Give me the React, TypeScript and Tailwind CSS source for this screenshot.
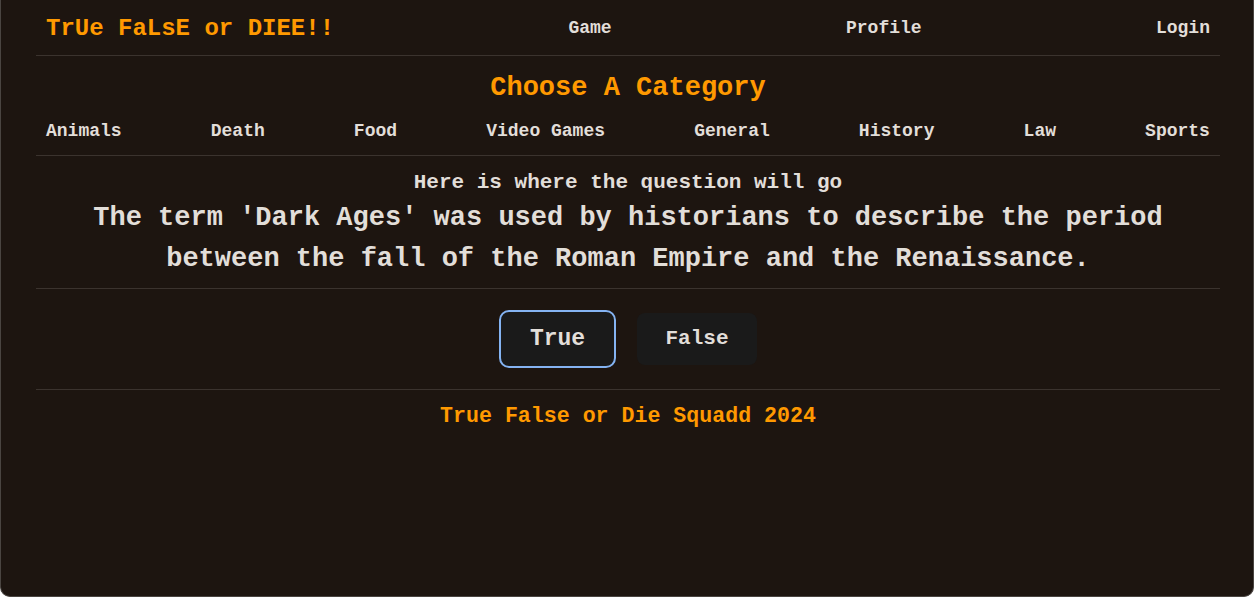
import React, { useState } from 'react';

const categories = [
  'Animals',
  'Death',
  'Food',
  'Video Games',
  'General',
  'History',
  'Law',
  'Sports',
];

const mono = { fontFamily: '"Liberation Mono", "Courier New", monospace' };

export default function App() {
  const [answer, setAnswer] = useState<string | null>('True');

  return (
    <div
      className="h-[597px] w-full overflow-hidden rounded-b-[10px] border-x border-b border-[#4a4541] bg-[#1d1510] font-bold text-[#e2ded9]"
      style={mono}
    >
      <div className="ml-[35px] mr-[33px]">
        <nav className="flex h-[56px] items-center justify-between border-b border-[#3b332e] px-[10px] pt-[2px]">
          <a className="text-[24px] text-[#ff9900]">TrUe FaLsE or DIEE!!</a>
          <a className="text-[18px]">Game</a>
          <a className="text-[18px]">Profile</a>
          <a className="text-[18px]">Login</a>
        </nav>

        <section className="border-b border-[#3b332e] pb-[12px]">
          <h2 className="pt-[16px] text-center text-[27px] leading-[32px] text-[#ff9900]">
            Choose A Category
          </h2>
          <div className="mt-[15px] flex justify-between px-[10px] text-[18px] leading-[24px]">
            {categories.map((c) => (
              <a key={c}>{c}</a>
            ))}
          </div>
        </section>

        <section className="border-b border-[#3b332e] pb-[8px] text-center">
          <h3 className="pt-[14px] text-[21px] leading-[25px]">
            Here is where the question will go
          </h3>
          <p className="mx-auto mt-[3px] max-w-[1100px] text-[27px] leading-[41px]">
            The term 'Dark Ages' was used by historians to describe the period
            between the fall of the Roman Empire and the Renaissance.
          </p>
        </section>

        <section className="flex items-center justify-center gap-[21px] border-b border-[#3b332e] py-[21px]">
          {['True', 'False'].map((a) => (
            <button
              key={a}
              onClick={() => setAnswer(a)}
              className={
                a === answer
                  ? 'h-[58px] w-[117px] rounded-[10px] border-2 border-[#84b3f2] bg-[#1a1a1a] text-[23px]'
                  : 'h-[52px] w-[120px] rounded-[8px] border border-transparent bg-[#1a1a1a] text-[21px]'
              }
            >
              {a}
            </button>
          ))}
        </section>

        <footer className="pt-[14px] text-center text-[21.6px] leading-[25px] text-[#ff9900]">
          True False or Die Squadd 2024
        </footer>
      </div>
    </div>
  );
}
